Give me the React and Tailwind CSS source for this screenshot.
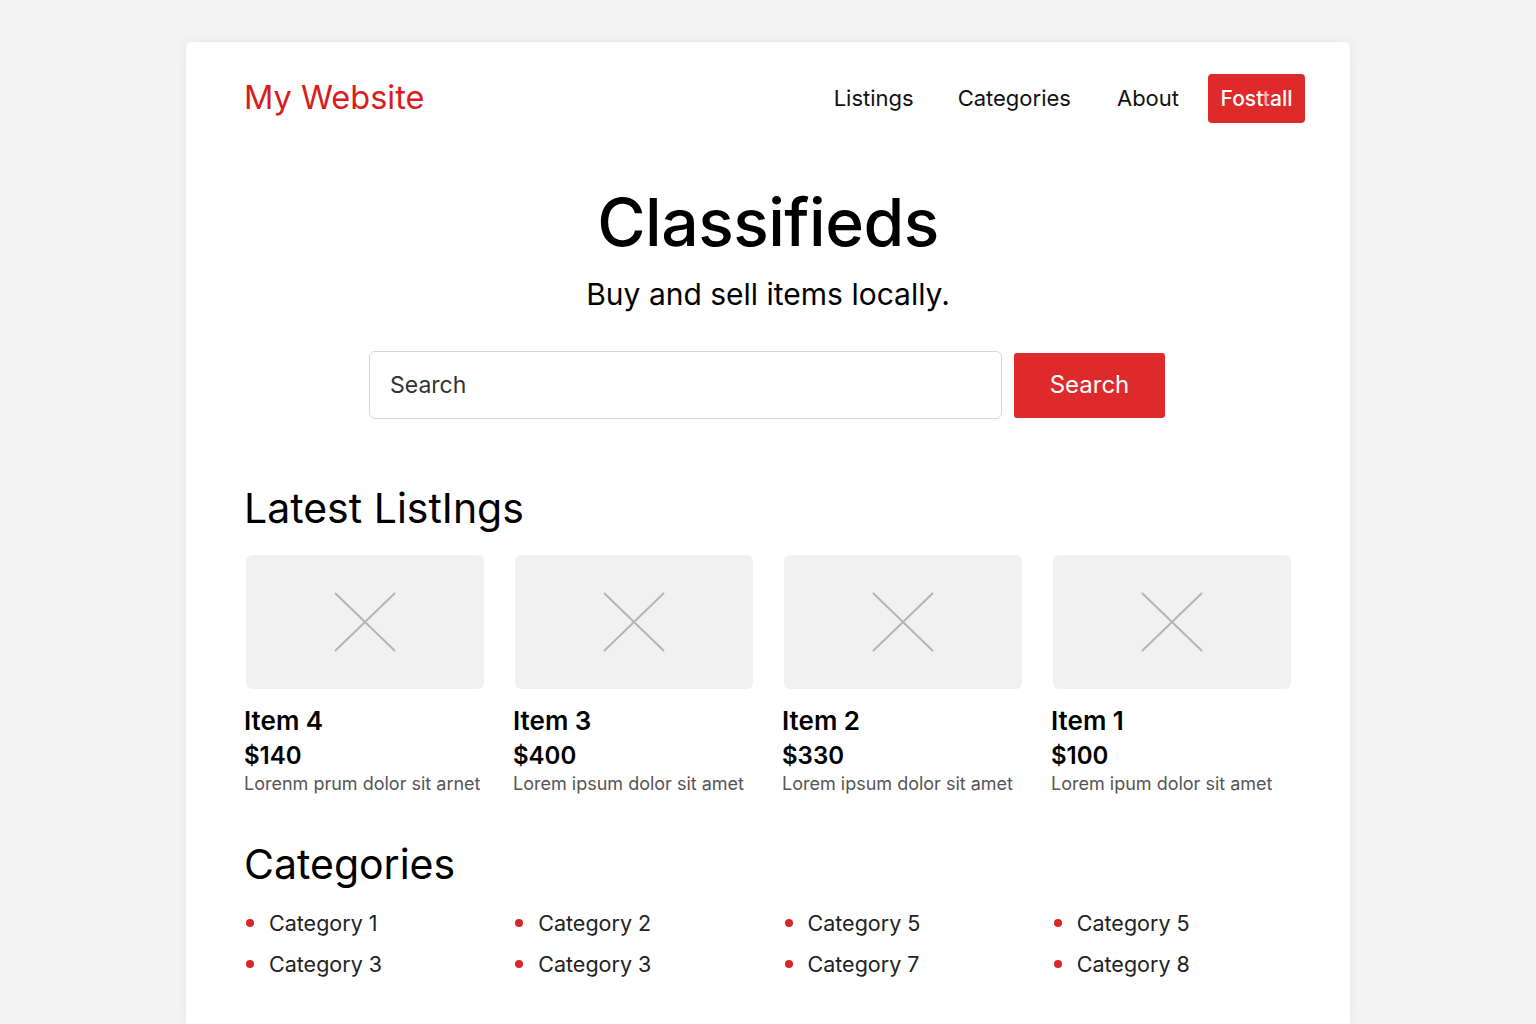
import React from "react";

const listings = [
  { title: "Item 4", price: "$140", desc: "Lorenm prum dolor sit arnet" },
  { title: "Item 3", price: "$400", desc: "Lorem ipsum dolor sit amet" },
  { title: "Item 2", price: "$330", desc: "Lorem ipsum dolor sit amet" },
  { title: "Item 1", price: "$100", desc: "Lorem ipum dolor sit amet" },
];

const categories = [
  ["Category 1", "Category 3"],
  ["Category 2", "Category 3"],
  ["Category 5", "Category 7"],
  ["Category 5", "Category 8"],
];

function Placeholder() {
  return (
    <div className="flex h-[134px] items-center justify-center rounded-[6px] bg-[#f1f1f1]">
      <svg width="64" height="62" viewBox="0 0 64 62" fill="none">
        <path d="M2 2 L62 60 M62 2 L2 60" stroke="#b5b5b5" strokeWidth="2" />
      </svg>
    </div>
  );
}

export default function App() {
  return (
    <div className="min-h-[1024px] bg-[#f3f3f3] pt-[42px] font-['Inter',sans-serif] text-black">
      <div className="mx-auto h-[982px] w-[1164px] rounded-t-[6px] bg-white shadow-[0_0_12px_rgba(0,0,0,0.06)]">
        <header className="flex h-[113px] items-center justify-between pl-[58px] pr-[45px]">
          <div className="text-[32.5px] leading-none text-[#d91c1c]">My Website</div>
          <nav className="flex items-center text-[22px] text-[#111]">
            <a className="mr-[44px]">Listings</a>
            <a className="mr-[46px]">Categories</a>
            <a className="mr-[29px]">About</a>
            <button className="h-[49px] w-[97px] rounded-[4px] bg-[#de2a2a] text-[21px] font-medium text-white">
              Fost<span className="text-[#f5b5b5]">t</span>all
            </button>
          </nav>
        </header>

        <section className="flex flex-col items-center pt-[34px]">
          <h1 className="text-[66px] font-medium leading-none tracking-[-0.5px]">Classifieds</h1>
          <p className="mt-[24px] text-[30px] leading-none">Buy and sell items locally.</p>
          <div className="mt-[42px] flex items-center gap-[12px] pr-[2px]">
            <div className="flex h-[68px] w-[633px] items-center rounded-[6px] border border-[#d6d6d6] px-[20px] text-[23px] text-[#333]">
              Search
            </div>
            <button className="h-[65px] w-[151px] rounded-[3px] bg-[#de2a2a] text-[24px] text-white">Search</button>
          </div>
        </section>

        <section className="px-[58px] pt-[69px]">
          <h2 className="text-[41px] leading-none">Latest ListIngs</h2>
          <div className="mt-[26px] grid grid-cols-4 gap-x-[31px] pl-[2px] pr-[1px]">
            {listings.map((item) => (
              <div key={item.title}>
                <Placeholder />
                <div className="-ml-[2px] mt-[19px] text-[26px] font-semibold leading-none">{item.title}</div>
                <div className="-ml-[2px] mt-[10px] text-[24px] font-semibold leading-none">{item.price}</div>
                <div className="-ml-[2px] mt-[7px] text-[18px] leading-none text-[#555]">{item.desc}</div>
              </div>
            ))}
          </div>
        </section>

        <section className="px-[58px] pt-[51px]">
          <h2 className="text-[41px] leading-none">Categories</h2>
          <div className="mt-[26px] grid grid-cols-4 gap-x-[31px] pl-[2px]">
            {categories.map((col, i) => (
              <ul key={i} className="flex flex-col gap-[17px]">
                {col.map((c, j) => (
                  <li key={j} className="flex items-center text-[21.5px] leading-[24px] text-[#222]">
                    <span className="mr-[15px] h-[8px] w-[8px] rounded-full bg-[#d92525]" />
                    {c}
                  </li>
                ))}
              </ul>
            ))}
          </div>
        </section>
      </div>
    </div>
  );
}
